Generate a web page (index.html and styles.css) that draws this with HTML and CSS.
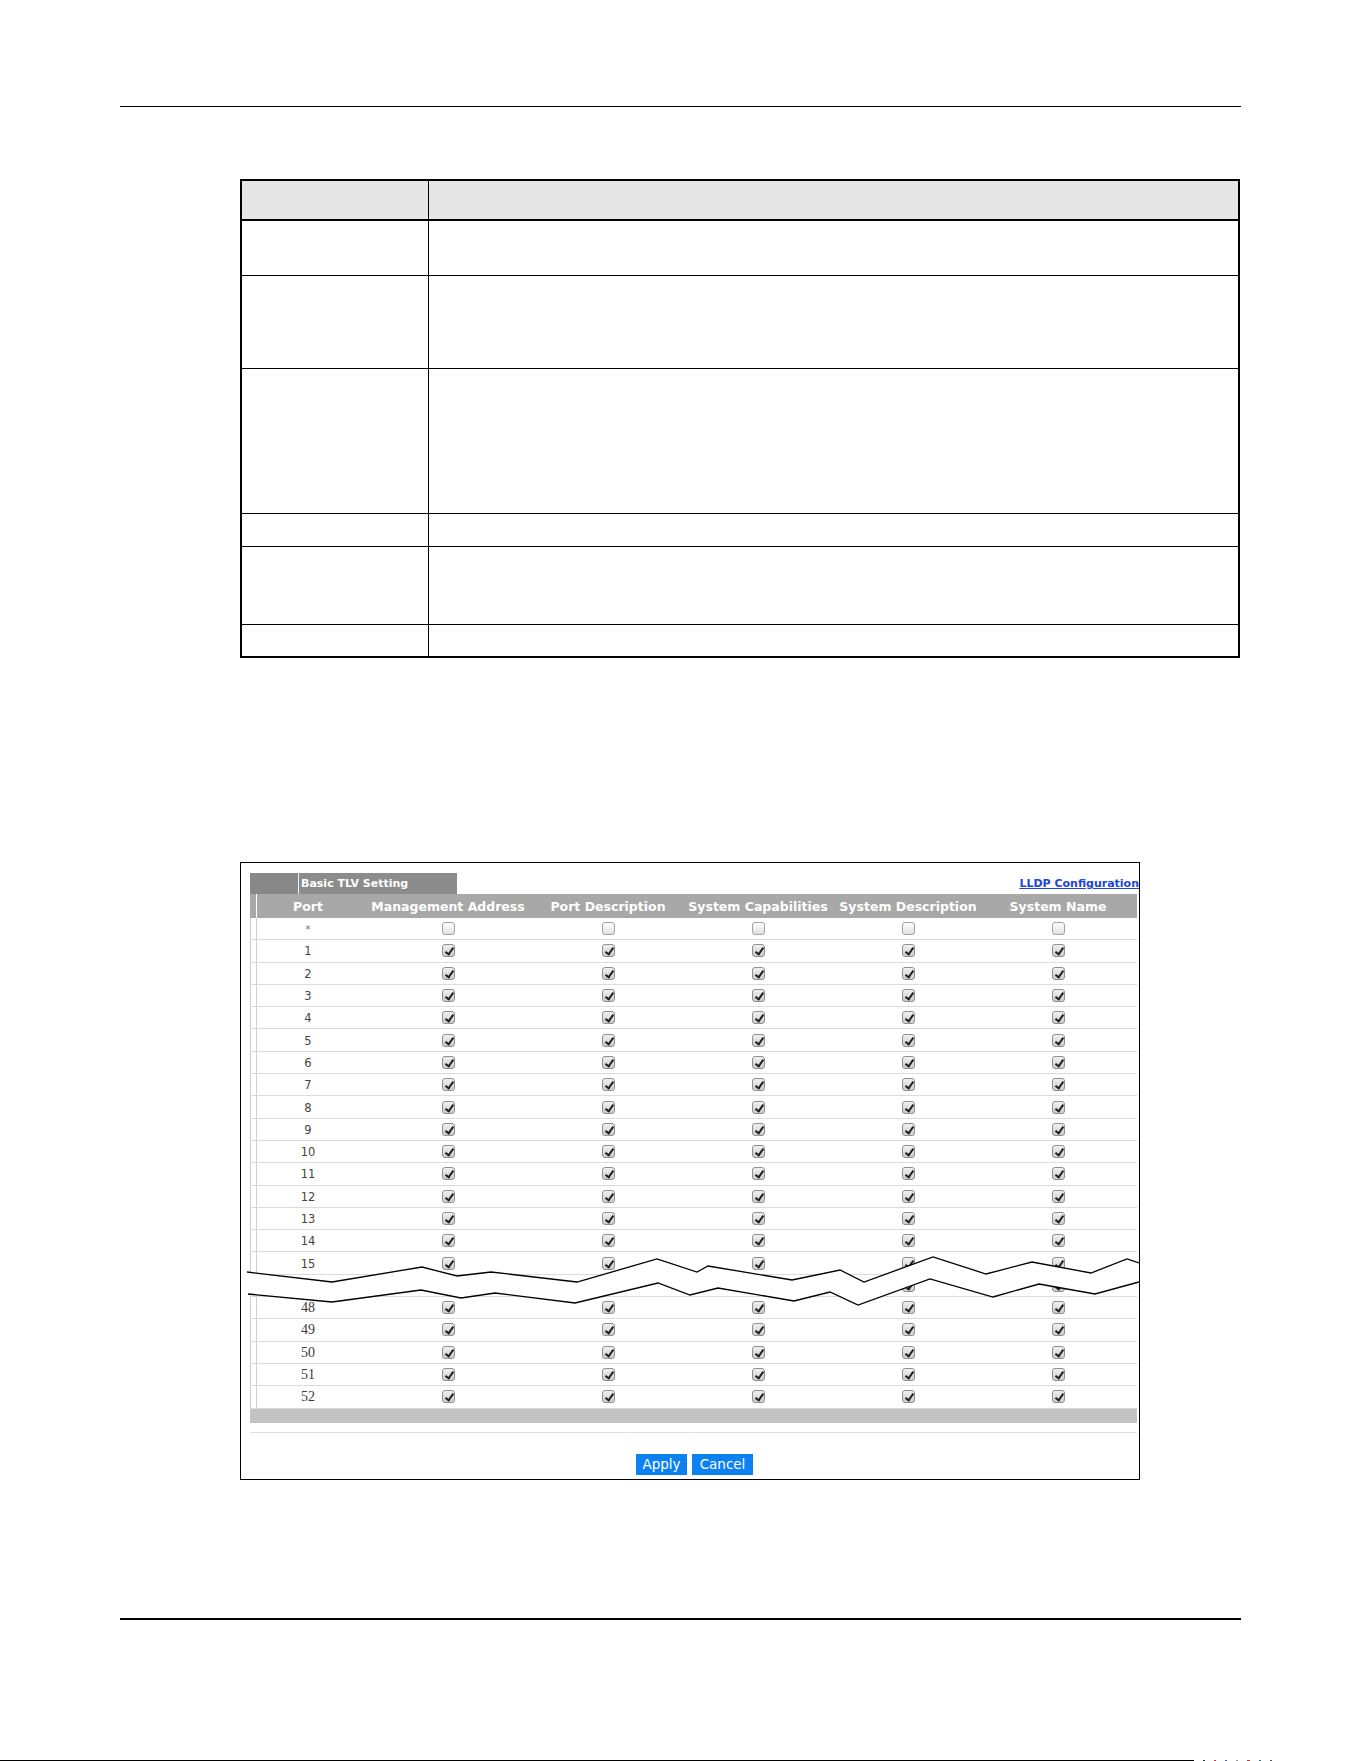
FILE: index.html
```html
<!DOCTYPE html>
<html>
<head>
<meta charset="utf-8">
<title>LLDP Basic TLV Setting</title>
<link rel="stylesheet" href="styles.css">
</head>

<body>
<div class="page">
	<div class="rule"></div>

	<!-- field description table -->
	<div class="desc">
		<div class="desc-row desc-head"><div></div><div></div></div>
		<div class="desc-row h55"><div></div><div></div></div>
		<div class="desc-row h93"><div></div><div></div></div>
		<div class="desc-row h145"><div></div><div></div></div>
		<div class="desc-row h33"><div></div><div></div></div>
		<div class="desc-row h78"><div></div><div></div></div>
		<div class="desc-row h31 last"><div></div><div></div></div>
	</div>

	<!-- Basic TLV Setting screen -->
	<div class="panel">
		<div class="tabbar">
			<div class="tab"><span class="tab-side"></span><span class="tab-title">Basic TLV Setting</span></div>
			<a class="link" href="#">LLDP Configuration</a>
		</div>
		<div class="grid">
			<div class="row head">
				<span>Port</span><span>Management Address</span><span>Port Description</span><span>System Capabilities</span><span>System Description</span><span>System Name</span>
			</div>
			<div class="row"><span class="port star">*</span><i class="cb"></i><i class="cb"></i><i class="cb"></i><i class="cb"></i><i class="cb"></i></div>
			<div class="row"><span class="port">1</span><i class="cb on"></i><i class="cb on"></i><i class="cb on"></i><i class="cb on"></i><i class="cb on"></i></div>
			<div class="row"><span class="port">2</span><i class="cb on"></i><i class="cb on"></i><i class="cb on"></i><i class="cb on"></i><i class="cb on"></i></div>
			<div class="row"><span class="port">3</span><i class="cb on"></i><i class="cb on"></i><i class="cb on"></i><i class="cb on"></i><i class="cb on"></i></div>
			<div class="row"><span class="port">4</span><i class="cb on"></i><i class="cb on"></i><i class="cb on"></i><i class="cb on"></i><i class="cb on"></i></div>
			<div class="row"><span class="port">5</span><i class="cb on"></i><i class="cb on"></i><i class="cb on"></i><i class="cb on"></i><i class="cb on"></i></div>
			<div class="row"><span class="port">6</span><i class="cb on"></i><i class="cb on"></i><i class="cb on"></i><i class="cb on"></i><i class="cb on"></i></div>
			<div class="row"><span class="port">7</span><i class="cb on"></i><i class="cb on"></i><i class="cb on"></i><i class="cb on"></i><i class="cb on"></i></div>
			<div class="row"><span class="port">8</span><i class="cb on"></i><i class="cb on"></i><i class="cb on"></i><i class="cb on"></i><i class="cb on"></i></div>
			<div class="row"><span class="port">9</span><i class="cb on"></i><i class="cb on"></i><i class="cb on"></i><i class="cb on"></i><i class="cb on"></i></div>
			<div class="row"><span class="port">10</span><i class="cb on"></i><i class="cb on"></i><i class="cb on"></i><i class="cb on"></i><i class="cb on"></i></div>
			<div class="row"><span class="port">11</span><i class="cb on"></i><i class="cb on"></i><i class="cb on"></i><i class="cb on"></i><i class="cb on"></i></div>
			<div class="row"><span class="port">12</span><i class="cb on"></i><i class="cb on"></i><i class="cb on"></i><i class="cb on"></i><i class="cb on"></i></div>
			<div class="row"><span class="port">13</span><i class="cb on"></i><i class="cb on"></i><i class="cb on"></i><i class="cb on"></i><i class="cb on"></i></div>
			<div class="row"><span class="port">14</span><i class="cb on"></i><i class="cb on"></i><i class="cb on"></i><i class="cb on"></i><i class="cb on"></i></div>
			<div class="row"><span class="port">15</span><i class="cb on"></i><i class="cb on"></i><i class="cb on"></i><i class="cb on"></i><i class="cb on"></i></div>
			<div class="row"><span class="port"></span><i class="cb on"></i><i class="cb on"></i><i class="cb on"></i><i class="cb on"></i><i class="cb on"></i></div>
			<div class="row"><span class="port serif">48</span><i class="cb on"></i><i class="cb on"></i><i class="cb on"></i><i class="cb on"></i><i class="cb on"></i></div>
			<div class="row"><span class="port serif">49</span><i class="cb on"></i><i class="cb on"></i><i class="cb on"></i><i class="cb on"></i><i class="cb on"></i></div>
			<div class="row"><span class="port serif">50</span><i class="cb on"></i><i class="cb on"></i><i class="cb on"></i><i class="cb on"></i><i class="cb on"></i></div>
			<div class="row"><span class="port serif">51</span><i class="cb on"></i><i class="cb on"></i><i class="cb on"></i><i class="cb on"></i><i class="cb on"></i></div>
			<div class="row"><span class="port serif">52</span><i class="cb on"></i><i class="cb on"></i><i class="cb on"></i><i class="cb on"></i><i class="cb on"></i></div>
		</div>
		<div class="footbar"></div>
		<div class="sep"></div>
		<div class="buttons">
			<button class="btn apply">Apply</button><button class="btn cancel">Cancel</button>
		</div>

		<!-- cut mark between port 15 and port 48 -->
		<svg class="cut" width="893" height="60" viewBox="0 0 893 60">
			<polygon fill="#fff" points="1,22 86,32 176,17 211,26 245,22 331,32 411,9 451,22 462,16 546,30 594,20 618,32 687,7 740,24 786,12 845,23 881,9 893,13 893,32 849,44 793,34 747,47 684,29 612,55 584,42 548,51 472,38 444,45 412,33 329,53 249,43 215,48 175,40 86,52 2,44"/>
			<polyline fill="none" stroke="#000" stroke-width="1.3" points="1,22 86,32 176,17 211,26 245,22 331,32 411,9 451,22 462,16 546,30 594,20 618,32 687,7 740,24 786,12 845,23 881,9 893,13"/>
			<polyline fill="none" stroke="#000" stroke-width="1.3" points="2,44 86,52 175,40 215,48 249,43 329,53 412,33 444,45 472,38 548,51 584,42 612,55 684,29 747,47 793,34 849,44 893,32"/>
		</svg>
	</div>

	<div class="rule bottom"></div>

	<div class="scan">
		<span class="scan-line"></span>
		<i class="dot d1"></i><i class="dot d2"></i><i class="dot d3"></i><i class="dot d4"></i><i class="dot d5"></i><i class="dot d6"></i><i class="dot d7"></i>
	</div>
</div>
</body>
</html>
```

FILE: styles.css
```css
*{ margin:0; padding:0; box-sizing:border-box;}
body{ background:#fff; font-family:"DejaVu Sans", Verdana, sans-serif; color:#333;}
.page{ height:1761px; padding-top:106px; overflow:hidden;}

.rule{ margin:0 120px; height:1px; background:#000;}
.rule.bottom{ margin-top:138px; height:2px;}

/* description table */
.desc{ margin:72px 0 0 240px; width:1000px; border:2px solid #000;}
.desc-row{ display:grid; grid-template-columns:186px 1fr; border-bottom:1px solid #000;}
.desc-row > div + div{ border-left:1px solid #000;}
.desc-row.last{ border-bottom:0;}
.desc-head{ height:40px; background:#e6e6e6; border-bottom-width:2px;}
.h55{ height:55px;}
.h93{ height:93px;}
.h145{ height:145px;}
.h33{ height:33px;}
.h78{ height:78px;}
.h31{ height:31px;}

/* screen capture */
.panel{ position:relative; margin:204px 0 0 240px; width:900px; height:618px; border:1px solid #000; padding:10px 2px 0 9px;}

.tabbar{ display:flex; justify-content:space-between; align-items:flex-end; height:21px;}
.tab{ display:flex; height:21px; width:207px; background:#8c8c8c;}
.tab-side{ width:49px; border-right:1px solid #f2f2f2; background:#888;}
.tab-title{ color:#fff; font-weight:bold; font-size:11px; line-height:21px; padding-left:2px;}
.link{ color:#1c45d8; font-weight:bold; font-size:11px; line-height:14px; margin-right:-2px; margin-bottom:3px; white-space:nowrap;}

.grid{ background:linear-gradient(#cfcfcf,#cfcfcf) 0 0/1px 100% no-repeat, linear-gradient(#cfcfcf,#cfcfcf) 6px 0/1px 100% no-repeat;}
.row{ display:grid; grid-template-columns:102px 178px 142px 158px 142px 158px; align-items:center; padding-left:7px; height:22.3px; border-bottom:1px solid #dcdcdc;}
.row.head{ height:24px; border-bottom:0; background:#a8a8a8 linear-gradient(#fff,#fff) 6px 0/1px 100% no-repeat; color:#fff; font-weight:bold; font-size:12.5px; text-align:center; white-space:nowrap;}
.port{ text-align:center; font-size:11.5px; color:#444; padding-top:1px;}
.port.star{ font-size:10px; color:#777;}
.port.serif{ font-family:"Liberation Serif", "Times New Roman", serif; font-size:14px; color:#3a3a3a;}

.cb{ justify-self:center; position:relative; width:13px; height:13px; border:1px solid #a3a3a3; border-radius:3px; background:linear-gradient(#fefefe,#e1e1e1);}
.cb.on{ border-color:#8f8f8f; background:linear-gradient(#f1f1f1,#cbcbcb);}
.cb.on::after{ content:""; position:absolute; left:4px; top:1px; width:3px; height:7px; border:solid #1f1f1f; border-width:0 2px 2px 0; transform:rotate(35deg);}

.footbar{ height:14px; background:#c3c3c3;}
.sep{ margin-top:9px; height:1px; background:#e0e0e0;}
.buttons{ display:flex; justify-content:center; gap:5px; margin-top:21px; padding-left:2px;}
.btn{ height:21px; border:0; background:#0d80f2; color:#fff; font-family:"DejaVu Sans", Verdana, sans-serif; font-size:13.5px; line-height:21px; text-align:center;}
.btn.apply{ width:51px;}
.btn.cancel{ width:61px;}

.cut{ position:absolute; left:5px; top:387px;}

/* scanner edge at the foot of the page */
.scan{ display:flex; align-items:flex-end; gap:9px; margin-top:140px; height:1px;}
.scan-line{ width:1194px; height:1px; background:#000;}
.dot{ width:2px; height:1px; background:#333;}
.d2{ background:#d33;}
.d3{ background:#36c;}
.d4{ background:#999;}
.d5{ background:#d33; width:3px;}
.d6{ background:#36c;}
.d7{ background:#555;}
```
